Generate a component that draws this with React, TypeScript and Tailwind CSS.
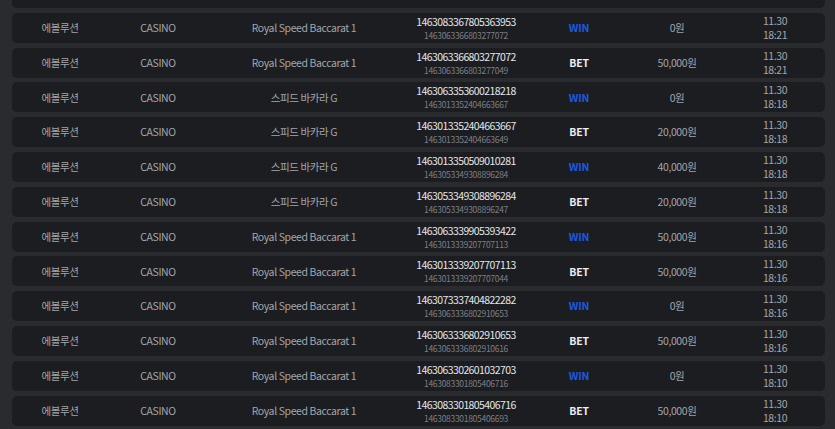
type Bet = {
  game: string;
  id: string;
  ref: string;
  type: 'WIN' | 'BET';
  amount: string;
  time: string;
};

const ROYAL = 'Royal Speed Baccarat 1';
const SPEED = '스피드 바카라 G';

const rows: Bet[] = [
  { game: ROYAL, id: '1463083367805363953', ref: '1463063366803277072', type: 'WIN', amount: '0원', time: '18:21' },
  { game: ROYAL, id: '1463063366803277072', ref: '1463063366803277049', type: 'BET', amount: '50,000원', time: '18:21' },
  { game: SPEED, id: '1463063353600218218', ref: '1463013352404663667', type: 'WIN', amount: '0원', time: '18:18' },
  { game: SPEED, id: '1463013352404663667', ref: '1463013352404663649', type: 'BET', amount: '20,000원', time: '18:18' },
  { game: SPEED, id: '1463013350509010281', ref: '1463053349308896284', type: 'WIN', amount: '40,000원', time: '18:18' },
  { game: SPEED, id: '1463053349308896284', ref: '1463053349308896247', type: 'BET', amount: '20,000원', time: '18:18' },
  { game: ROYAL, id: '1463063339905393422', ref: '1463013339207707113', type: 'WIN', amount: '50,000원', time: '18:16' },
  { game: ROYAL, id: '1463013339207707113', ref: '1463013339207707044', type: 'BET', amount: '50,000원', time: '18:16' },
  { game: ROYAL, id: '1463073337404822282', ref: '1463063336802910653', type: 'WIN', amount: '0원', time: '18:16' },
  { game: ROYAL, id: '1463063336802910653', ref: '1463063336802910616', type: 'BET', amount: '50,000원', time: '18:16' },
  { game: ROYAL, id: '1463063302601032703', ref: '1463083301805406716', type: 'WIN', amount: '0원', time: '18:10' },
  { game: ROYAL, id: '1463083301805406716', ref: '1463083301805406693', type: 'BET', amount: '50,000원', time: '18:10' },
];

const cols = 'grid grid-cols-[96px_100px_192px_132px_94px_102px_94px] items-center';

function Row({ b }: { b: Bet }) {
  return (
    <div className={`${cols} h-[30px] rounded-[5px] bg-[#1c1d20] text-[10.5px] tracking-[-0.4px] text-[#a2a5ab] text-center`}>
      <div>에볼루션</div>
      <div>CASINO</div>
      <div>{b.game}</div>
      <div className="flex flex-col pt-[1px]">
        <span className="block h-[14px] leading-[14px] text-[10.5px] tracking-[-0.6px] text-[#e4e5e8]">{b.id}</span>
        <span className="block h-[13px] leading-[13px] text-[8.5px] tracking-[-0.3px] text-[#7c7f86]">{b.ref}</span>
      </div>
      <div
        className={
          b.type === 'WIN'
            ? 'font-bold tracking-[-0.2px] text-[#1b5ae0]'
            : 'font-bold tracking-[-0.2px] text-[#eceef0]'
        }
      >
        {b.type}
      </div>
      <div>{b.amount}</div>
      <div className="flex flex-col">
        <span className="block h-[14px] leading-[14px]">11.30</span>
        <span className="block h-[14px] leading-[14px]">{b.time}</span>
      </div>
    </div>
  );
}

export default function App() {
  return (
    <div
      className="h-screen overflow-hidden bg-[#292b2f] pl-[12px] pr-[10px]"
      style={{ fontFamily: '"Noto Sans CJK KR", "Noto Sans", sans-serif' }}
    >
      <div className="-mt-[22px] flex flex-col gap-[4.8px]">
        {/* 위로 스크롤된 이전 행 */}
        <div className="h-[30px] rounded-[5px] bg-[#1c1d20]" />
        {rows.map((b, i) => (
          <Row key={i} b={b} />
        ))}
      </div>
    </div>
  );
}
